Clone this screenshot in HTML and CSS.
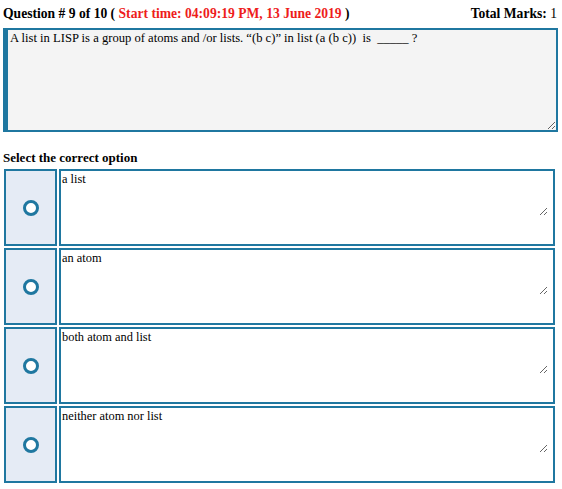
FILE: index.html
```html
<!DOCTYPE html>
<html lang="en">
  <head>
    <meta charset="UTF-8" />
    <meta name="viewport" content="width=device-width, initial-scale=1.0" />
    <title>Quiz Question</title>
    <link rel="stylesheet" href="styles.css">
  </head>
  <body>
    <div class="quiz">
      <div class="quiz-head">
        <span class="q-title">Question # 9 of 10 ( <span class="start-time">Start time: 04:09:19 PM, 13 June 2019</span> )</span>
        <span class="marks">Total Marks: <span class="marks-value">1</span></span>
      </div>

      <textarea class="question" readonly>A list in LISP is a group of atoms and /or lists. “(b c)” in list (a (b c))  is  _____ ?</textarea>

      <h4 class="select-label">Select the correct option</h4>

      <div class="options">
        <div class="option">
          <label class="option-radio"><span class="radio"></span></label>
          <div class="option-box">
            <textarea class="option-text" readonly>a list</textarea>
          </div>
        </div>
        <div class="option">
          <label class="option-radio"><span class="radio"></span></label>
          <div class="option-box">
            <textarea class="option-text" readonly>an atom</textarea>
          </div>
        </div>
        <div class="option">
          <label class="option-radio"><span class="radio"></span></label>
          <div class="option-box">
            <textarea class="option-text" readonly>both atom and list</textarea>
          </div>
        </div>
        <div class="option">
          <label class="option-radio"><span class="radio"></span></label>
          <div class="option-box">
            <textarea class="option-text" readonly>neither atom nor list</textarea>
          </div>
        </div>
      </div>
    </div>
  </body>
</html>
```

FILE: styles.css
```css
body {
  margin: 0;
  background-color: white;
  font-family: "Liberation Serif", "Times New Roman", serif;
  color: black;
}

.quiz {
  padding: 6px 5px 0 3px;
}

.quiz-head {
  display: flex;
  justify-content: space-between;
  align-items: baseline;
  font-size: 13.6px;
  font-weight: bold;
  height: 19px;
}

.start-time {
  color: #ee1c1c;
}

.marks-value {
  font-weight: normal;
}

.question {
  display: block;
  box-sizing: border-box;
  width: 555px;
  height: 104px;
  margin: 3px 0 0 0;
  padding: 1px 2px;
  border: 2px solid #1f77a0;
  border-left: 5px solid #1f77a0;
  background-color: #f4f4f4;
  font-family: "Liberation Serif", "Times New Roman", serif;
  font-size: 12.6px;
  color: black;
  outline: none;
}

.select-label {
  margin: 18px 0 3px 0;
  font-size: 13px;
  font-weight: bold;
}

.options {
  display: flex;
  flex-direction: column;
  gap: 2px;
}

.option {
  display: flex;
  gap: 2px;
  height: 77px;
  padding-left: 1px;
}

.option-radio {
  box-sizing: border-box;
  width: 53px;
  border: 2px solid #1f77a0;
  background-color: #e5ebf5;
  display: flex;
  align-items: center;
  justify-content: center;
}

.radio {
  box-sizing: border-box;
  width: 16px;
  height: 16px;
  border: 3px solid #1f77a0;
  border-radius: 50%;
  background-color: white;
}

.option-box {
  box-sizing: border-box;
  width: 496px;
  border: 2px solid #1f77a0;
  background-color: white;
}

.option-text {
  display: block;
  box-sizing: border-box;
  width: 487px;
  height: 45px;
  margin: 0;
  padding: 1px 1px;
  border: none;
  background-color: white;
  font-family: "Liberation Serif", "Times New Roman", serif;
  font-size: 12.4px;
  color: black;
  outline: none;
}
```
